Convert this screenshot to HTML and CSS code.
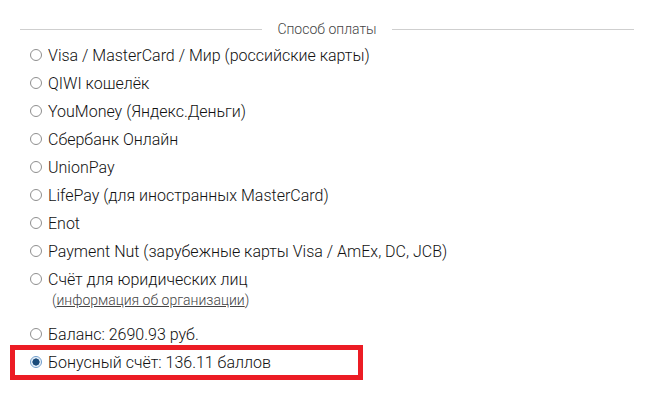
FILE: index.html
```html
<!DOCTYPE html>
<html lang="ru">
<head>
    <meta charset="utf-8">
    <link rel="stylesheet" href="styles.css">
</head>
<body>
    <div class="payment">
        <div class="legend"><span>Способ оплаты</span></div>
        <div class="methods">
            <label class="method"><input type="radio" name="pay"> Visa / MasterCard / Мир (российские карты)</label>
            <label class="method"><input type="radio" name="pay"> QIWI кошелёк</label>
            <label class="method"><input type="radio" name="pay"> YouMoney (Яндекс.Деньги)</label>
            <label class="method"><input type="radio" name="pay"> Сбербанк Онлайн</label>
            <label class="method"><input type="radio" name="pay"> UnionPay</label>
            <label class="method"><input type="radio" name="pay"> LifePay (для иностранных MasterCard)</label>
            <label class="method"><input type="radio" name="pay"> Enot</label>
            <label class="method"><input type="radio" name="pay"> Payment Nut (зарубежные карты Visa / AmEx, DC, JCB)</label>
            <div class="legal">
                <label class="method"><input type="radio" name="pay"> Счёт для юридических лиц</label>
                <div class="note">(<a href="#">информация об организации</a>)</div>
            </div>
            <label class="method"><input type="radio" name="pay"> Баланс: 2690.93 руб.</label>
            <label class="method bonus"><input type="radio" name="pay" checked> Бонусный счёт: 136.11 баллов</label>
        </div>
    </div>
</body>
</html>
```

FILE: styles.css
```css
* {
    margin: 0;
    padding: 0;
    box-sizing: border-box;
}

html, body {
    width: 100%;
    height: 100%;
    background: #fff;
    font-family: Roboto, "Liberation Sans", Arial, sans-serif;
}

.payment {
    padding: 21px 20px 0 20px;
}

.payment .legend {
    display: flex;
    align-items: center;
    height: 16px;
    font-size: 14px;
    font-weight: 300;
    color: #444;
}

.payment .legend::before,
.payment .legend::after {
    content: "";
    flex: 1;
    border-top: 1px solid #cfcfcf;
}

.payment .legend span {
    padding: 0 15px;
}

.payment .methods {
    padding-top: 4px;
    padding-left: 10px;
}

.payment .method {
    display: flex;
    align-items: center;
    height: 28px;
    font-size: 16px;
    font-weight: 300;
    color: #111;
    white-space: nowrap;
}

.payment .method input {
    appearance: none;
    -webkit-appearance: none;
    width: 12px;
    height: 12px;
    border: 1px solid #8f8f8f;
    border-radius: 50%;
    background: #fff;
    margin-right: 6px;
    flex-shrink: 0;
}

.payment .method input:checked {
    border-color: #6d9ccb;
    background: radial-gradient(circle, #1b4b7a 0, #1b4b7a 3.3px, #cfe0f0 3.8px, #fff 5px);
}

.payment .legal {
    margin-bottom: 12px;
}

.payment .note {
    padding-left: 22px;
    margin-top: -1px;
    font-size: 14px;
    font-weight: 300;
    line-height: 16px;
    color: #444;
}

.payment .note a {
    color: #444;
}

.payment .bonus {
    position: relative;
}

.payment .bonus::after {
    content: "";
    position: absolute;
    left: -20px;
    top: -3px;
    width: 343px;
    height: 25px;
    border: 5px solid #ec1c24;
}
```
